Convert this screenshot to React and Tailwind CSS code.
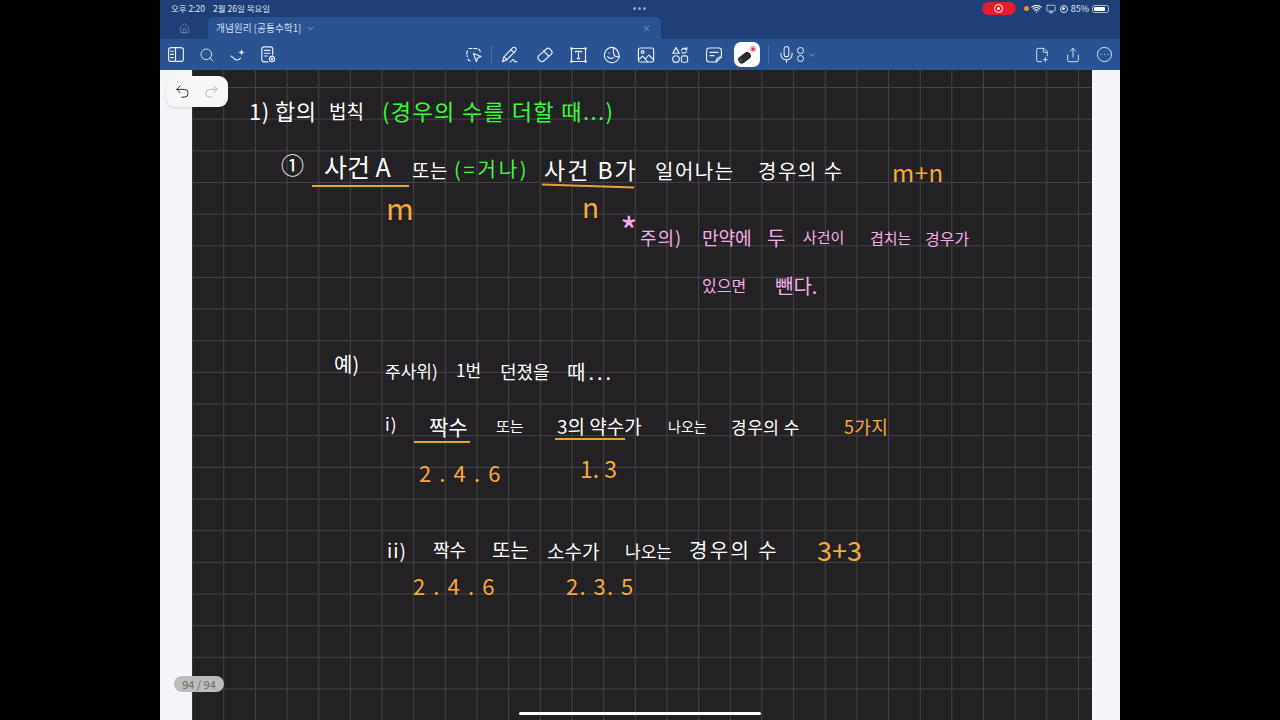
import React from "react";
import { ChevronDown, CircleEllipsis, FilePlus2, House, Mic, Monitor, Redo2, Search, Share, Undo2, Wifi, X } from "lucide-react";

function Ink({ className, children }) {
  return (
    <span
      className={`absolute whitespace-nowrap font-['Noto_Sans_CJK_KR','Noto_Sans',sans-serif] font-normal leading-none ${className}`}
    >
      {children}
    </span>
  );
}

function Glyph({ children, className = "h-[18px] w-[18px]", box = "0 0 18 18" }) {
  return (
    <svg viewBox={box} className={className} fill="none" stroke="currentColor" strokeWidth="1.15" strokeLinecap="round" strokeLinejoin="round">
      {children}
    </svg>
  );
}

function BookIcon() {
  return (
    <Glyph box="0 0 16 15" className="h-[15px] w-[16px]">
      <rect x="0.6" y="0.6" width="14.8" height="13.8" rx="2.5" />
      <path d="M7.5 0.6v13.8M2.6 4.2h2.8M2.6 7.4h2.8M2.6 10.6h2.8" />
    </Glyph>
  );
}

function SparkleArcIcon() {
  return (
    <Glyph box="0 0 16 14" className="h-[14px] w-[16px]">
      <path d="M1 8l2 1.6M3 9.6c1.2 2.6 5 3.4 7.6 0.6" />
      <path d="M11.5 1.2l0.9 2.2 2.2 0.9-2.2 0.9-0.9 2.2-0.9-2.2-2.2-0.9 2.2-0.9z" fill="currentColor" stroke="none" />
    </Glyph>
  );
}

function NoteSearchIcon() {
  return (
    <Glyph box="0 0 15 17" className="h-[17px] w-[15px]">
      <path d="M7 15.9H3a2.2 2.2 0 0 1-2.2-2.2V3A2.2 2.2 0 0 1 3 .8h6.5A2.2 2.2 0 0 1 11.7 3v6" />
      <path d="M3.4 4.4h5.6M3.4 7.2h5.6M3.4 10h2.8" />
      <circle cx="11" cy="13" r="2.6" />
      <circle cx="11" cy="13" r="0.6" fill="currentColor" />
    </Glyph>
  );
}

function LassoIcon() {
  return (
    <Glyph>
      <path d="M4 2.5h6.5c2.5 0 4.5 1.2 5 3.5M2.5 5c-1 2-1 4 0 5.5M3 13c.5 1.5 1.5 2 3 2.2" strokeDasharray="3 1.8" />
      <path d="M8.5 7.5l7.5 3-3.2 1.3-1.5 3.7z" />
    </Glyph>
  );
}

function PenIcon() {
  return (
    <Glyph>
      <path d="M12.6 1.8c.9-.8 2.2-.7 3 .2.7.8.7 2-.1 2.8L7 13.6l-4.6 2 1.6-4.7z" />
      <path d="M10.8 3.6l3.3 3M4 10.9l3 2.7" />
      <path d="M10 16c1.5 0 2-2.4 3.3-2.4 1.2 0 .4 2 1.5 2h2" />
    </Glyph>
  );
}

function EraserIcon() {
  return (
    <Glyph>
      <rect x="1.4" y="5.4" width="15.2" height="7.2" rx="2.6" transform="rotate(-42 9 9)" />
      <path d="M7.6 4.8l5 5.2" />
    </Glyph>
  );
}

function TextBoxIcon() {
  return (
    <Glyph box="0 0 17 16" className="h-[16px] w-[17px]">
      <rect x="1.5" y="1.5" width="14" height="13" />
      <path d="M5.5 5V4.4h6V5M8.5 4.4v7.2M7.2 11.6h2.6" />
      <g fill="currentColor" stroke="none">
        <circle cx="1.5" cy="1.5" r="1.3" />
        <circle cx="15.5" cy="1.5" r="1.3" />
        <circle cx="1.5" cy="14.5" r="1.3" />
        <circle cx="15.5" cy="14.5" r="1.3" />
      </g>
    </Glyph>
  );
}

function StickerIcon() {
  return (
    <Glyph>
      <path d="M10.5 1.6a7.6 7.6 0 1 0 5.9 8.9c-3.4.8-5-.2-5.6-2.4-.5-2-.7-4.2-.3-6.5z" />
      <path d="M10.5 1.6c2.8.8 5 3.3 5.9 8.9" />
      <path d="M4.6 10.5c1.2 2.2 3.8 2.6 5.8 1" />
      <circle cx="6" cy="7" r="0.7" fill="currentColor" stroke="none" />
    </Glyph>
  );
}

function ImageIcon() {
  return (
    <Glyph>
      <rect x="1.4" y="2" width="15.2" height="14" rx="1.8" />
      <circle cx="5.6" cy="6" r="1.4" />
      <path d="M1.6 13.6l4.2-3.6 4.6 5.8M8.4 13l3.4-4 4.6 4.6" />
    </Glyph>
  );
}

function ShapesIcon() {
  return (
    <Glyph>
      <path d="M5 1.6l3.2 5.6H1.8z" />
      <path d="M10.6 4.4c.2-2 3-3 5-1.2M15.8 1.4v2h-2M15.6 5c-.4 2-3 2.8-4.6 1.4" />
      <circle cx="5" cy="13" r="3.3" />
      <rect x="10.4" y="9.8" width="6.2" height="6.4" rx="1.8" />
    </Glyph>
  );
}

function NoteIcon() {
  return (
    <Glyph>
      <path d="M11 16H4a2.4 2.4 0 0 1-2.4-2.4V4.4A2.4 2.4 0 0 1 4 2h10a2.4 2.4 0 0 1 2.4 2.4v6.6z" />
      <path d="M11 16c0-3 1-5 5.4-5M5 6.4h8M5 9.6h4" />
    </Glyph>
  );
}

function LaserIcon() {
  return (
    <svg viewBox="0 0 22 20" className="h-[20px] w-[22px]">
      <rect x="1.5" y="9" width="14" height="7.5" rx="3.5" fill="#2b2b2d" transform="rotate(-38 8.5 12.7)" />
      <circle cx="4.8" cy="15.2" r="1" fill="#77777a" />
      <circle cx="17" cy="4" r="3.2" fill="#f3b5bd" />
      <circle cx="17" cy="4" r="1.6" fill="#e0213a" />
    </svg>
  );
}

function MicStackIcon() {
  return (
    <div className="flex items-center gap-[1px] text-[#e8eef8]">
      <Mic size={19} strokeWidth={1.3} />
      <div className="flex flex-col gap-[1px]">
        <span className="h-[7px] w-[7px] rounded-full border border-[#e8eef8]" />
        <span className="h-[7px] w-[7px] rounded-full border border-[#e8eef8]" />
      </div>
      <ChevronDown size={10} strokeWidth={1.4} className="ml-[2px] text-[#b9c8de]" />
    </div>
  );
}

function StatusBar() {
  return (
    <div className="relative flex h-[17px] items-center justify-between px-[11px] text-[8.5px] text-[#dfe6f2]">
      <div className="flex gap-[8px]">
        <span>오후 2:20</span>
        <span>2월 26일 목요일</span>
      </div>
      <div className="absolute left-[473px] top-[7px] flex gap-[2px]">
        <span className="h-[3px] w-[3px] rounded-full bg-[#8fa3c4]" />
        <span className="h-[3px] w-[3px] rounded-full bg-[#8fa3c4]" />
        <span className="h-[3px] w-[3px] rounded-full bg-[#8fa3c4]" />
      </div>
      <div className="flex items-center gap-[3px]">
        <span className="flex h-[13px] w-[34px] items-center justify-center rounded-full bg-[#e11d2e]">
          <span className="flex h-[9px] w-[9px] items-center justify-center rounded-full border border-white">
            <span className="h-[3px] w-[3px] rounded-full bg-white" />
          </span>
        </span>
        <span className="ml-[5px] h-[5px] w-[5px] rounded-full bg-[#e8912d]" />
        <Wifi size={11} strokeWidth={2.6} className="-ml-[1px]" />
        <Monitor size={10} strokeWidth={1.8} className="ml-[1px]" />
        <span className="ml-[1px] flex h-[8px] w-[8px] items-center justify-center rounded-full border border-[#dfe6f2]">
          <span className="h-[3px] w-[3px] rounded-full bg-[#dfe6f2]" />
        </span>
        <span className="text-[9px]">85%</span>
        <span className="flex h-[8px] w-[17px] items-center rounded-[2.5px] border border-[#aebcd2] p-[1px]">
          <span className="h-full w-[85%] rounded-[1px] bg-white" />
        </span>
      </div>
    </div>
  );
}

function TabBar() {
  return (
    <div className="flex h-[22px] items-stretch text-[#d5dfee]">
      <div className="flex w-[48px] items-center justify-center text-[#8ea4c6]">
        <House size={11} strokeWidth={1.3} />
      </div>
      <div className="flex w-[453px] items-center rounded-t-[6px] bg-[#2a5394] pl-[8px] pr-[10px] text-[9.7px]">
        <span>개념원리 [공통수학1]</span>
        <ChevronDown size={9} strokeWidth={1.5} className="ml-[5px]" />
        <X size={9} strokeWidth={1.5} className="ml-auto text-[#b9c8de]" />
      </div>
    </div>
  );
}

function Toolbar() {
  return (
    <div className="relative flex h-[31px] items-center bg-[#2a5394] pl-[8px] pr-[7px] text-[#e8eef8]">
      <div className="flex items-center gap-[15px]">
        <BookIcon />
        <Search size={16} strokeWidth={1.3} />
        <SparkleArcIcon />
        <NoteSearchIcon />
      </div>
      <div className="absolute left-[305px] flex items-center gap-[16px]">
        <LassoIcon />
        <span className="-mx-[8px] h-[18px] w-px bg-[#4a6ea8]" />
        <PenIcon />
        <span className="ml-[2px]">
          <EraserIcon />
        </span>
        <TextBoxIcon />
        <StickerIcon />
        <ImageIcon />
        <ShapesIcon />
        <NoteIcon />
        <span className="-ml-[5px] flex h-[25px] w-[26px] items-center justify-center rounded-[7px] bg-white">
          <LaserIcon />
        </span>
        <span className="-mx-[8px] h-[18px] w-px bg-[#4a6ea8]" />
        <MicStackIcon />
      </div>
      <div className="ml-auto flex items-center gap-[15px]">
        <FilePlus2 size={16} strokeWidth={1.3} />
        <Share size={16} strokeWidth={1.3} />
        <CircleEllipsis size={17} strokeWidth={1.3} />
      </div>
    </div>
  );
}

function Notes() {
  return (
    <>
      <Ink className="left-[57px] top-[29px] text-[22px] tracking-[0.5px] text-white">1) 합의</Ink>
      <Ink className="left-[137px] top-[31px] text-[19px] text-white">법칙</Ink>
      <Ink className="left-[190px] top-[29px] text-[22px] tracking-[1.4px] text-[#3dfb3d]">(경우의 수를 더할 때...)</Ink>

      <Ink className="left-[89px] top-[83px] text-[23px] text-white">①</Ink>
      <Ink className="left-[132px] top-[84px] text-[25px] text-white">사건 A</Ink>
      <Ink className="left-[220px] top-[90px] text-[19px] tracking-[0.5px] text-white">또는</Ink>
      <Ink className="left-[262px] top-[89px] text-[20px] tracking-[2.8px] text-[#3dfb3d]">(=거나)</Ink>
      <Ink className="left-[352px] top-[88px] text-[23px] tracking-[2px] text-white">사건 B가</Ink>
      <Ink className="left-[463px] top-[91px] text-[20px] tracking-[1.5px] text-white">일어나는</Ink>
      <Ink className="left-[566px] top-[91px] text-[20px] tracking-[1.5px] text-white">경우의 수</Ink>
      <Ink className="left-[700px] top-[90px] text-[24px] tracking-[0.5px] text-[#f5ab3c]">m+n</Ink>
      <div className="absolute left-[120px] top-[115px] h-[2px] w-[97px] bg-[#e8a23a]" />
      <div className="absolute left-[350px] top-[115px] h-[2px] w-[92px] rotate-[2deg] bg-[#e8a23a]" />
      <Ink className="left-[194px] top-[122px] text-[30px] text-[#f5ab3c]">m</Ink>
      <Ink className="left-[390px] top-[122px] text-[28px] text-[#f5ab3c]">n</Ink>

      <Ink className="left-[428px] top-[141px] text-[38px] font-light text-[#f6aeea]">*</Ink>
      <Ink className="left-[448px] top-[158px] text-[18px] tracking-[1px] text-[#f6aeea]">주의)</Ink>
      <Ink className="left-[510px] top-[158px] text-[18px] text-[#f6aeea]">만약에</Ink>
      <Ink className="left-[575px] top-[158px] text-[20px] text-[#f6aeea]">두</Ink>
      <Ink className="left-[611px] top-[159px] text-[15px] text-[#f6aeea]">사건이</Ink>
      <Ink className="left-[678px] top-[160px] text-[15px] text-[#f6aeea]">겹치는</Ink>
      <Ink className="left-[733px] top-[160px] text-[16px] text-[#f6aeea]">경우가</Ink>
      <Ink className="left-[510px] top-[207px] text-[16px] text-[#f6aeea]">있으면</Ink>
      <Ink className="left-[583px] top-[206px] text-[20px] text-[#f6aeea]">뺀다.</Ink>

      <Ink className="left-[142px] top-[284px] text-[20px] text-white">예)</Ink>
      <Ink className="left-[193px] top-[292px] text-[17px] text-white">주사위)</Ink>
      <Ink className="left-[264px] top-[291px] text-[17px] text-white">1번</Ink>
      <Ink className="left-[308px] top-[292px] text-[18px] text-white">던졌을</Ink>
      <Ink className="left-[375px] top-[292px] text-[20px] tracking-[3px] text-white">때...</Ink>

      <Ink className="left-[193px] top-[345px] text-[17px] tracking-[1px] text-white">i)</Ink>
      <Ink className="left-[237px] top-[346px] text-[21px] text-white">짝수</Ink>
      <Ink className="left-[304px] top-[348px] text-[15px] text-white">또는</Ink>
      <Ink className="left-[365px] top-[346px] text-[19px] text-white">3의 약수가</Ink>
      <Ink className="left-[476px] top-[349px] text-[14px] text-white">나오는</Ink>
      <Ink className="left-[539px] top-[348px] text-[17px] tracking-[0.5px] text-white">경우의 수</Ink>
      <Ink className="left-[652px] top-[347px] text-[18px] tracking-[0.3px] text-[#f5ab3c]">5가지</Ink>
      <div className="absolute left-[222px] top-[371px] h-[2px] w-[56px] bg-[#e8a23a]" />
      <div className="absolute left-[363px] top-[368px] h-[2px] w-[70px] bg-[#e8a23a]" />
      <Ink className="left-[227px] top-[391px] text-[22px] tracking-[1.6px] text-[#f5ab3c]">2 . 4 . 6</Ink>
      <Ink className="left-[388px] top-[387px] text-[23px] text-[#f5ab3c]">1. 3</Ink>

      <Ink className="left-[195px] top-[470px] text-[19px] tracking-[1px] text-white">ii)</Ink>
      <Ink className="left-[241px] top-[470px] text-[18px] text-white">짝수</Ink>
      <Ink className="left-[300px] top-[470px] text-[20px] text-white">또는</Ink>
      <Ink className="left-[355px] top-[471px] text-[19px] text-white">소수가</Ink>
      <Ink className="left-[433px] top-[472px] text-[17px] text-white">나오는</Ink>
      <Ink className="left-[497px] top-[470px] text-[20px] tracking-[2.4px] text-white">경우의 수</Ink>
      <Ink className="left-[625px] top-[466px] text-[27px] text-[#f5ab3c]">3+3</Ink>
      <Ink className="left-[221px] top-[504px] text-[22px] tracking-[1.6px] text-[#f5ab3c]">2 . 4 . 6</Ink>
      <Ink className="left-[374px] top-[504px] text-[22px] tracking-[1.4px] text-[#f5ab3c]">2. 3. 5</Ink>
    </>
  );
}

export default function App() {
  return (
    <div className="flex h-[720px] w-[1280px] overflow-hidden bg-black font-['Noto_Sans_CJK_KR','Noto_Sans',sans-serif]">
      <div className="w-[160px]" />
      <main className="relative flex w-[960px] flex-col">
        <header className="bg-[#1f3f78]">
          <StatusBar />
          <TabBar />
        </header>
        <Toolbar />
        <div className="flex flex-1">
          <div className="w-[32px] bg-[#f5f4f8]" />
          <div className="relative w-[900px] bg-[#232123] bg-[linear-gradient(#444245_1px,transparent_1px),linear-gradient(90deg,#444245_1px,transparent_1px)] bg-[size:31.67px_31.67px] bg-[position:-0.4px_17px]">
            <Notes />
          </div>
          <div className="w-[28px] bg-[#f5f4f8]" />
        </div>
        <div className="absolute left-[6px] top-[76px] flex h-[31px] w-[62px] items-center justify-around rounded-[9px] bg-[#f7f6f9] px-[2px] shadow-sm">
          <Undo2 size={17} strokeWidth={1.4} className="text-[#2c2c2e]" />
          <Redo2 size={17} strokeWidth={1.4} className="text-[#b8b8bc]" />
        </div>
        <div className="absolute left-[14px] top-[676px] flex h-[16px] w-[50px] items-center justify-center rounded-full bg-[#bcbcbc] text-[11px] text-[#666666]">
          94 / 94
        </div>
        <div className="absolute bottom-[5px] left-[359px] h-[3px] w-[242px] rounded-full bg-white" />
      </main>
      <div className="w-[160px]" />
    </div>
  );
}
